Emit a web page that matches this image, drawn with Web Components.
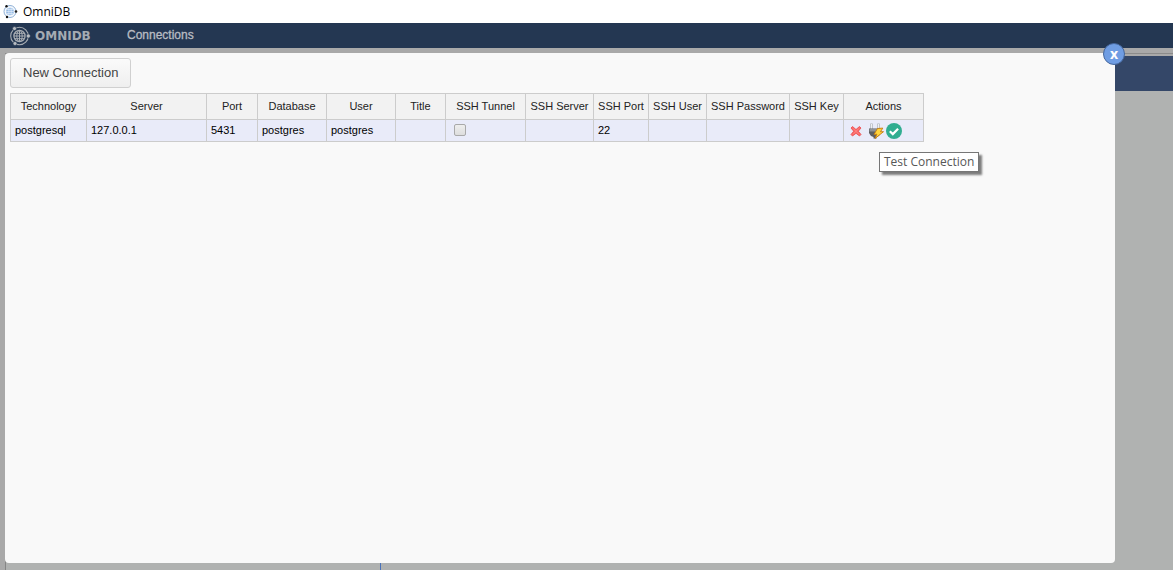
<!DOCTYPE html>
<html lang="en">
<head>
<meta charset="utf-8">
<title>OmniDB</title>
<style>
  html, body { height: 100%; margin: 0; }
  body { font-family: "Liberation Sans", Arial, sans-serif; font-size: 12px; overflow: hidden; }
</style>
</head>
<body>
<omni-app>
  <omni-titlebar slot="title">OmniDB</omni-titlebar>
  <omni-navbar slot="nav"><a href="#connections">Connections</a></omni-navbar>
  <omni-workspace slot="workspace"></omni-workspace>
  <omni-dialog slot="dialog">
    <omni-button>New Connection</omni-button>
    <omni-connections></omni-connections>
  </omni-dialog>
</omni-app>

<script>
function define(name, html, setup) {
  const template = document.createElement('template');
  template.innerHTML = html;
  customElements.define(name, class extends HTMLElement {
    constructor() {
      super();
      this.attachShadow({ mode: 'open' }).append(template.content.cloneNode(true));
      if (setup) setup(this.shadowRoot, this);
    }
  });
}

define('omni-app', `
  <style>
    :host { display: flex; flex-direction: column; height: 100vh; background: #a9a9a9; }
    .stage { position: relative; flex: 1; display: flex; min-height: 0; }
    ::slotted([slot="workspace"]) { flex: 1; }
    ::slotted([slot="dialog"]) { position: absolute; top: 5px; bottom: 7px; left: 5px; right: 58px; }
  </style>
  <slot name="title"></slot>
  <slot name="nav"></slot>
  <div class="stage"><slot name="workspace"></slot><slot name="dialog"></slot></div>`);

define('omni-titlebar', `
  <style>
    :host { display: flex; align-items: center; gap: 5px; height: 23px; padding-left: 3px; background: #fff; color: #000; font: 12px "Open Sans", "Segoe UI", sans-serif; }
    svg { display: block; }
  </style>
  <svg width="15" height="16" viewBox="0 0 15 16" aria-hidden="true">
    <circle cx="7" cy="7.5" r="6" fill="#f5f9fd" stroke="#8fb0d6"/>
    <circle cx="7" cy="7.5" r="3.8" fill="#8db6e4"/>
    <path d="M3 7.5h8M7 3.5v8M4 5.5h6M4 9.5h6M5.3 4v7M8.7 4v7" stroke="#e9f2fb" stroke-width=".6" fill="none"/>
    <circle cx="3.5" cy="2.3" r="1.2" fill="#111"/><circle cx="13" cy="7.5" r="1.3" fill="#222"/><circle cx="4" cy="13" r="1.2" fill="#111"/>
  </svg>
  <span><slot></slot></span>`);

define('omni-navbar', `
  <style>
    :host { display: flex; align-items: center; height: 25px; padding-left: 9px; background: #243752; color: #b5bac0; }
    svg { display: block; margin-right: 4px; }
    .brand { width: 92px; font: bold 12px "DejaVu Sans", sans-serif; color: #a5abb3; }
    nav { padding-bottom: 2px; }
    ::slotted(a) { color: #b8bcc2; text-decoration: none; -webkit-text-stroke: .3px #b8bcc2; }
  </style>
  <svg width="22" height="20" viewBox="0 0 22 20" fill="none" stroke="#a8adb3" aria-hidden="true">
    <circle cx="10.5" cy="10" r="8.8" stroke-width="1.1"/>
    <circle cx="10.5" cy="10" r="5.6" stroke-width="1.3"/>
    <ellipse cx="10.5" cy="10" rx="2.7" ry="5.6"/>
    <path d="M10.5 4v12M5 10h11M5.5 7.3h10M5.5 12.7h10" stroke-width="1"/>
    <g fill="#b8bcc1" stroke="#243752" stroke-width=".6"><circle cx="5.5" cy="2.6" r="2"/><circle cx="19.3" cy="10" r="2.1"/><circle cx="6" cy="17.5" r="2"/></g>
  </svg>
  <span class="brand">OMNIDB</span>
  <nav><slot></slot></nav>`);

define('omni-workspace', `
  <style>
    :host { display: flex; flex-direction: column; padding-left: 5px; }
    .rule { height: 5px; border-bottom: 1px solid #8b8b8b; }
    .panes { flex: 1; display: flex; margin-top: 2px; border-left: 1px solid #858585; background: #b0b2b1; }
    .tree { width: 374px; border-right: 1px solid #4a72b8; }
    .editor { flex: 1; }
    .tabs { height: 35px; background: #344768; }
  </style>
  <div class="rule"></div>
  <div class="panes">
    <div class="tree"></div>
    <div class="editor"><div class="tabs"></div></div>
  </div>`);

define('omni-dialog', `
  <style>
    :host { display: block; border-radius: 4px; background: #f9f9f9; }
    .body { display: flex; flex-direction: column; align-items: flex-start; gap: 5px; padding: 5px; }
    .close { position: absolute; top: -10px; right: -10px; width: 22px; height: 22px; padding: 0; border: 1px solid #44669c; border-radius: 50%; background: #6f9de3; color: #fff; font: bold 14px/20px "Open Sans", sans-serif; text-align: center; }
  </style>
  <div class="body" role="dialog" aria-label="Connections"><slot></slot></div>
  <button class="close" type="button" aria-label="Close">x</button>`);

define('omni-button', `
  <style>
    :host { display: block; }
    button { display: block; height: 30px; padding: 0 12px 2px; border: 1px solid #d0d0d0; border-radius: 3px; background: linear-gradient(#fafafa, #efefef); color: #444; font: 13px "Liberation Sans", Arial, sans-serif; }
  </style>
  <button type="button"><slot></slot></button>`);

define('omni-action', `
  <style>
    :host { position: relative; display: block; width: 16px; height: 16px; }
    button { display: block; width: 16px; height: 16px; padding: 0; border: 0; background: none; }
    ::slotted(svg) { display: block; }
    ::slotted([slot="tip"]) { position: absolute; top: 29px; left: -7px; z-index: 1; padding: 0 4px; border: 1px solid #767676; background: #fff; box-shadow: 3px 3px 2px rgba(0, 0, 0, .5); color: #575757; font: 12px/18px "Open Sans", "Segoe UI", sans-serif; white-space: nowrap; }
  </style>
  <button type="button"><slot></slot></button>
  <slot name="tip"></slot>`,
  (root, host) => root.querySelector('button').setAttribute('aria-label', host.getAttribute('label') || 'Action'));

define('omni-connections', `
  <style>
    :host { display: block; }
    table { width: 914px; table-layout: fixed; border-spacing: 0; border: solid #ccc; border-width: 1px 0 0 1px; font-size: 11px; color: #000; }
    th, td { box-sizing: border-box; padding: 0 4px 2px; border: solid #ccc; border-width: 0 1px 1px 0; white-space: nowrap; text-align: left; }
    th { height: 26px; padding: 0 0 2px; background: #f2f2f2; color: #222; font-weight: normal; text-align: center; }
    td { height: 22px; background: #e9ebf9; }
    td.control { padding-bottom: 0; }
    input { appearance: none; display: block; box-sizing: border-box; width: 12px; height: 12px; margin: 0 4px; border: 1px solid #a9a9a9; border-radius: 2px; background: linear-gradient(#eee, #ddd); }
    .actions { display: flex; }
    .actions omni-action:nth-child(2) { margin: 0 2px 0 4px; }
  </style>
  <table>
    <colgroup></colgroup>
    <thead><tr></tr></thead>
    <tbody><tr>
      <td>postgresql</td><td>127.0.0.1</td><td>5431</td><td>postgres</td><td>postgres</td><td></td>
      <td><input type="checkbox" aria-label="SSH Tunnel"></td>
      <td></td><td>22</td><td></td><td></td><td></td>
      <td class="control"><div class="actions">
        <omni-action label="Remove Connection">
          <svg width="16" height="16" viewBox="0 0 16 16"><path d="M4.5 3.5 8 6.5l3.5-3L13 5l-2.7 3.2L13 11.5 11.5 13 8 10.3 4.5 13 3 11.5l2.7-3.3L3 5z" fill="#fb6866" stroke="#ea4a4e" stroke-width=".8" stroke-linejoin="round"/><path d="m5 5.3 6 6m0-6-6 6" stroke="#ff8583"/></svg>
        </omni-action>
        <omni-action label="Select Connection">
          <svg width="16" height="16" viewBox="0 0 16 16"><path d="M3.5 6V.5M10.5 6V.5" stroke="#aeb4ba" stroke-width="2.4"/><path d="M3.5 6V1M10.5 6V1" stroke="#eef0f2" stroke-width="1"/><path d="M1 5.5h11.5V10q-1 3.5-4 4v1.5h-3V14Q2 13 1 10z" fill="#5d5f61"/><path d="M1.5 6h10.5v2.5H1.5z" fill="#8f9295"/><path d="m9.5 5.5 5.3-.4-2.3 3.6h3L7 15.5l1.9-4.3-2.9.2z" fill="#ffd43b" stroke="#c47a12" stroke-width=".9" stroke-linejoin="round"/></svg>
        </omni-action>
        <omni-action label="Test Connection">
          <svg width="16" height="16" viewBox="0 0 16 16"><circle cx="8" cy="8" r="8" fill="#30ad91"/><path d="m3.8 8.2 3 2.9 5.3-5.4" fill="none" stroke="#fff" stroke-width="2.2"/></svg>
          <span slot="tip" role="tooltip">Test Connection</span>
        </omni-action>
      </div></td>
    </tr></tbody>
  </table>`,
  root => {
    const columns = [['Technology', 76], ['Server', 120], ['Port', 51], ['Database', 69], ['User', 69], ['Title', 50], ['SSH Tunnel', 80], ['SSH Server', 68], ['SSH Port', 55], ['SSH User', 58], ['SSH Password', 83], ['SSH Key', 54], ['Actions', 80]];
    for (const [label, width] of columns) {
      const col = document.createElement('col');
      col.style.width = width + 'px';
      root.querySelector('colgroup').append(col);
      const th = document.createElement('th');
      th.scope = 'col';
      th.textContent = label;
      root.querySelector('thead tr').append(th);
    }
  });
</script>
</body>
</html>
